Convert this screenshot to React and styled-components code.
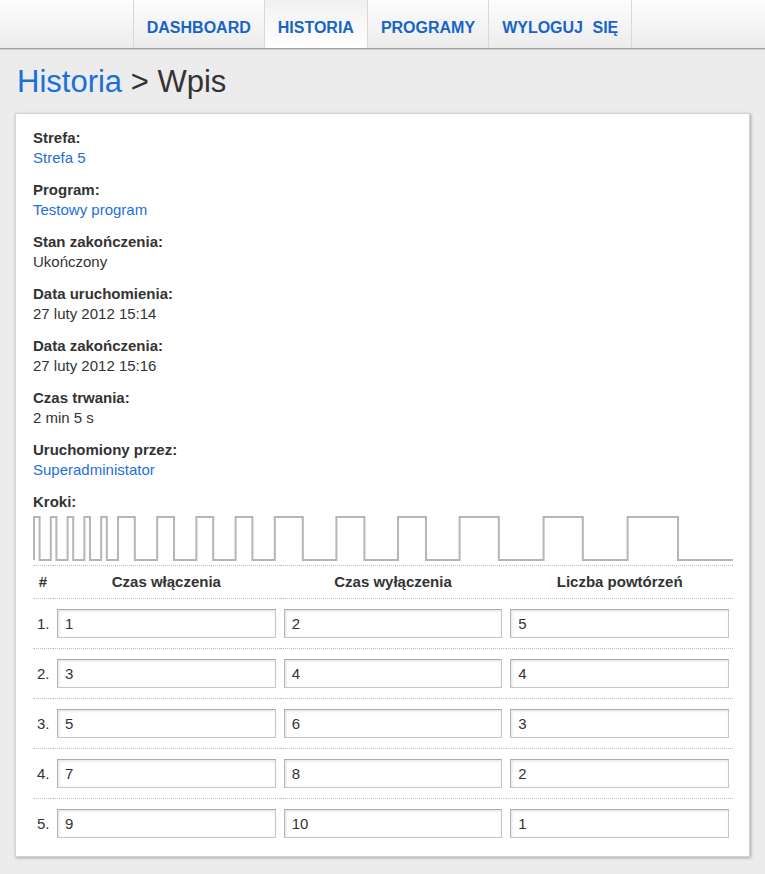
import React from 'react';
import styled, { createGlobalStyle } from 'styled-components';

const GlobalStyle = createGlobalStyle`
  body {
    margin: 0;
    background: #ececec;
    font-family: "Liberation Sans", Arial, sans-serif;
    color: #333;
  }
`;

const NavBar = styled.div`
  height: 48px;
  background: linear-gradient(#fdfdfd, #ececec);
  border-bottom: 1px solid #9e9e9e;
  box-shadow: 0 1px 1px #d4d4d4;
  display: flex;
  justify-content: center;
`;

const NavList = styled.ul`
  display: flex;
  margin: 0;
  padding: 0;
  list-style-type: none;
  border-left: 1px solid #d8d8d8;
`;

const NavItem = styled.li`
  border-right: 1px solid #d8d8d8;
  background: ${p => (p.active ? 'linear-gradient(#f1f1f1, #ffffff)' : 'transparent')};
`;

const NavLink = styled.a`
  display: block;
  padding: 8px 13px 0;
  line-height: 40px;
  font-size: 16px;
  font-weight: bold;
  color: #1764c9;
  text-decoration: none;
  word-spacing: 5px;
`;

const Page = styled.div`
  padding: 0 15px 18px;
`;

const Title = styled.h1`
  margin: 14px 0 13px 2px;
  font-size: 31px;
  line-height: 37px;
  font-weight: normal;
  color: #333;
`;

const TitleLink = styled.a`
  color: #1b70d8;
  text-decoration: none;
`;

const Card = styled.div`
  width: 700px;
  background: #fff;
  border: 1px solid #d4d4d4;
  box-shadow: 1px 1px 3px rgba(0, 0, 0, 0.3);
  padding: 14px 16px 8px 17px;
`;

const Field = styled.div`
  margin-bottom: 12px;
  font-size: 15px;
  line-height: 20px;
`;

const Label = styled.div`
  font-weight: bold;
  color: #333;
`;

const Value = styled.div`
  color: #333;
`;

const ValueLink = styled.a`
  color: #1e6fd9;
  text-decoration: none;
`;

const StepsLabel = styled(Label)`
  font-size: 15px;
  line-height: 20px;
`;

const WaveSvg = styled.svg`
  display: block;
  width: 700px;
  height: 50px;
`;

const Table = styled.table`
  width: 700px;
  margin-top: 3px;
  border-collapse: collapse;
  table-layout: fixed;
  font-size: 15px;
`;

const Th = styled.th`
  border-top: 1px dotted #bdbdbd;
  padding: 6px 4px;
  line-height: 20px;
  font-weight: bold;
  text-align: center;
  color: #333;
`;

const Td = styled.td`
  border-top: 1px dotted #bdbdbd;
  padding: 10px 4px;
  text-align: ${p => (p.num ? 'center' : 'left')};
  color: #333;
  line-height: 20px;
`;

const Input = styled.input`
  box-sizing: border-box;
  display: block;
  width: 100%;
  height: 29px;
  margin: 0;
  padding: 0 7px;
  font-family: "Liberation Sans", Arial, sans-serif;
  font-size: 15px;
  color: #333;
  background: #fff;
  border: 1px solid #c6c6c6;
  border-top-color: #a9a9a9;
  border-left-color: #b4b4b4;
  box-shadow: inset 1px 1px 3px rgba(0, 0, 0, 0.12);
  outline: none;
`;

const steps = [
  { on: 1, off: 2, n: 5 },
  { on: 3, off: 4, n: 4 },
  { on: 5, off: 6, n: 3 },
  { on: 7, off: 8, n: 2 },
  { on: 9, off: 10, n: 1 },
];

const fields = [
  { label: 'Strefa:', value: 'Strefa 5', link: true },
  { label: 'Program:', value: 'Testowy program', link: true },
  { label: 'Stan zakończenia:', value: 'Ukończony' },
  { label: 'Data uruchomienia:', value: '27 luty 2012 15:14' },
  { label: 'Data zakończenia:', value: '27 luty 2012 15:16' },
  { label: 'Czas trwania:', value: '2 min 5 s' },
  { label: 'Uruchomiony przez:', value: 'Superadministator', link: true },
];

function Wave() {
  const top = 5;
  const bottom = 48;
  const total = steps.reduce((s, st) => s + st.n * (st.on + st.off), 0);
  const k = 700 / total;
  let x = 1;
  let d = `M${x} ${bottom} L${x} ${top}`;
  steps.forEach(st => {
    for (let i = 0; i < st.n; i++) {
      x += st.on * k;
      d += ` L${x.toFixed(1)} ${top} L${x.toFixed(1)} ${bottom}`;
      x += st.off * k;
      d += ` L${x.toFixed(1)} ${bottom}`;
      if (x < 699) d += ` L${x.toFixed(1)} ${top}`;
    }
  });
  return (
    <WaveSvg viewBox="0 0 700 50">
      <path d={d} fill="none" stroke="#b5b5b5" strokeWidth="2" />
    </WaveSvg>
  );
}

export default function App() {
  return (
    <>
      <GlobalStyle />
      <NavBar>
        <NavList>
          <NavItem><NavLink href="#">DASHBOARD</NavLink></NavItem>
          <NavItem active><NavLink href="#">HISTORIA</NavLink></NavItem>
          <NavItem><NavLink href="#">PROGRAMY</NavLink></NavItem>
          <NavItem><NavLink href="#">WYLOGUJ SIĘ</NavLink></NavItem>
        </NavList>
      </NavBar>
      <Page>
        <Title>
          <TitleLink href="#">Historia</TitleLink> &gt; Wpis
        </Title>
        <Card>
          {fields.map(f => (
            <Field key={f.label}>
              <Label>{f.label}</Label>
              <Value>
                {f.link ? <ValueLink href="#">{f.value}</ValueLink> : f.value}
              </Value>
            </Field>
          ))}
          <StepsLabel>Kroki:</StepsLabel>
          <Wave />
          <Table>
            <colgroup>
              <col style={{ width: 20 }} />
              <col />
              <col />
              <col />
            </colgroup>
            <thead>
              <tr>
                <Th>#</Th>
                <Th>Czas włączenia</Th>
                <Th>Czas wyłączenia</Th>
                <Th>Liczba powtórzeń</Th>
              </tr>
            </thead>
            <tbody>
              {steps.map((st, i) => (
                <tr key={i}>
                  <Td num>{i + 1}.</Td>
                  <Td><Input defaultValue={st.on} /></Td>
                  <Td><Input defaultValue={st.off} /></Td>
                  <Td><Input defaultValue={st.n} /></Td>
                </tr>
              ))}
            </tbody>
          </Table>
        </Card>
      </Page>
    </>
  );
}
